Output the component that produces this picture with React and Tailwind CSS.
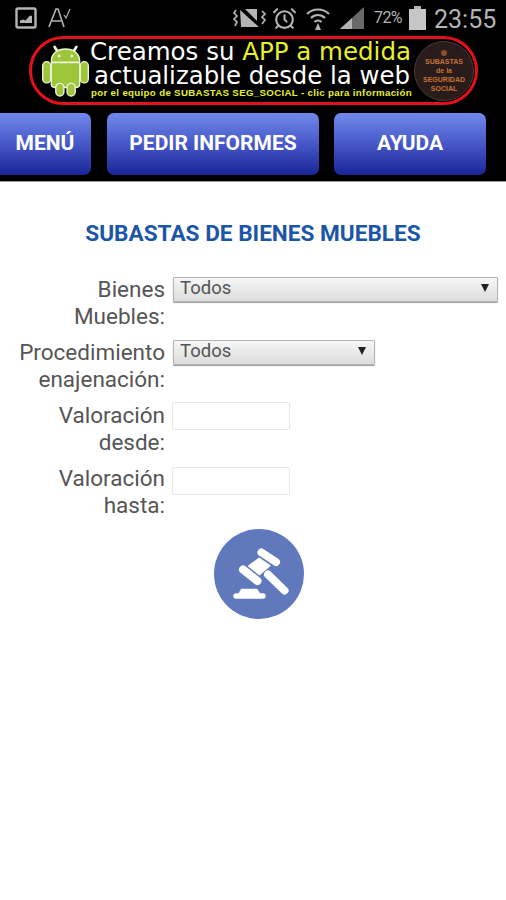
import React from "react";
import { AlarmClock } from "lucide-react";

function Android() {
  return (
    <svg width="47" height="53" viewBox="0 0 52 58" className="shrink-0">
      <g stroke="#eef5df" strokeWidth="3" fill="#9dc63a" paintOrder="stroke" strokeLinejoin="round">
        <path d="M14 3 L18 9 M38 3 L34 9" strokeLinecap="round" />
        <path d="M11 19 C11 10 18 6 26 6 C34 6 41 10 41 19 Z" />
        <rect x="1.5" y="20" width="7.5" height="22" rx="3.7" />
        <rect x="43" y="20" width="7.5" height="22" rx="3.7" />
        <path d="M11 21 H41 V44 a3 3 0 0 1 -3 3 H14 a3 3 0 0 1 -3 -3 Z" />
        <rect x="16" y="44" width="7.5" height="12.5" rx="3.7" />
        <rect x="28.5" y="44" width="7.5" height="12.5" rx="3.7" />
      </g>
      <circle cx="19" cy="13" r="1.6" fill="#eef5df" />
      <circle cx="33" cy="13" r="1.6" fill="#eef5df" />
    </svg>
  );
}

function Gavel() {
  return (
    <svg width="90" height="90" viewBox="0 0 90 90" fill="#fff" stroke="#fff" strokeLinecap="round" strokeLinejoin="round">
      <path d="M47.5 23.5 L62 33" strokeWidth="8" fill="none" />
      <path d="M29 40.5 L43.5 52" strokeWidth="8" fill="none" />
      <path d="M45 28.5 L57 36.5 L45.5 46.5 L33.5 37 Z" stroke="none" />
      <path d="M54 45.5 L70.5 61.5" strokeWidth="8" fill="none" />
      <path d="M27.5 60 H43 L46 64.5 H49 a2.4 2.4 0 0 1 0 5 H22 a2.4 2.4 0 0 1 0 -5 H24.5 Z" strokeWidth="0.5" />
    </svg>
  );
}

function StatusBar() {
  return (
    <div className="h-[36px] flex items-center text-[#b4b4b4] font-['Roboto',sans-serif]">
      <svg width="22" height="22" viewBox="0 0 22 22" className="ml-[15px]">
        <rect x="1.5" y="1.5" width="19" height="19" rx="1.5" fill="none" stroke="#b4b4b4" strokeWidth="2.4" />
        <path d="M5 16 V13.5 L8 12.5 L10.5 13.5 L15 8.5 L17 9 V16 Z" fill="#b4b4b4" />
      </svg>
      <svg width="24" height="24" viewBox="0 0 24 24" className="ml-[11px]">
        <path d="M1 21 L8 3 H10 L16 21 M4 15 H13" fill="none" stroke="#b4b4b4" strokeWidth="1.6" />
        <path d="M16 9 L18 12 L22 3" fill="none" stroke="#b4b4b4" strokeWidth="1.2" />
      </svg>
      <svg width="33" height="24" viewBox="0 0 33 24" className="ml-[161px]">
        <g fill="none" stroke="#b4b4b4" strokeWidth="1.7">
          <path d="M3 4 L1 7 L4 10 L1 13 L4 16 L2 20" />
          <path d="M29 5 L32 8 L29 11 L32 14 L29 18" />
        </g>
        <path d="M7 3 L25 19 L25 21 H8 Z" fill="#b4b4b4" />
        <path d="M5 1 L27 21" stroke="#000" strokeWidth="1.5" />
        <path d="M12 3 H24 V15 Z" fill="#b4b4b4" />
      </svg>
      <AlarmClock size={25} strokeWidth={2} className="ml-[6px]" color="#b4b4b4" />
      <svg width="24" height="26" viewBox="0 0 24 26" className="ml-[9px]">
        <g fill="none" stroke="#b4b4b4" strokeWidth="2.2">
          <path d="M1 9 C7 3 17 3 23 9" />
          <path d="M5 13 C9 9 15 9 19 13" />
          <path d="M8.5 17 C10.5 15 13.5 15 15.5 17" />
        </g>
        <path d="M9 25 L12 18 L15 25 Z" fill="#b4b4b4" />
      </svg>
      <svg width="26" height="24" viewBox="0 0 26 24" className="ml-[9px]">
        <path d="M1 23 L25 1 V23 Z" fill="#6a6a6a" />
        <path d="M1 23 L13 12 V23 Z" fill="#b4b4b4" />
      </svg>
      <span className="ml-[9px] text-[16px] w-[33px] tracking-[-0.6px]">72%</span>
      <svg width="17" height="24" viewBox="0 0 17 24" className="ml-[2px]">
        <rect x="5" y="0" width="7" height="3" fill="#b4b4b4" />
        <rect x="0" y="3" width="17" height="21" fill="#c6c6c6" />
      </svg>
      <span className="ml-[8px] mt-[2px] text-[25px] leading-none">23:55</span>
    </div>
  );
}

function Banner() {
  return (
    <div className="ml-[29px] mr-[28px] h-[69px] rounded-full border-[3px] border-[#e5101a] flex items-center pl-[10px] relative">
      <Android />
      <div className="ml-[1px] font-['DejaVu_Sans',sans-serif] text-white whitespace-nowrap">
        <div className="text-[24.5px] leading-[24px] mt-[-2px]">
          Creamos su <span className="text-[#e8f02a]">APP a medida</span>
        </div>
        <div className="text-[24.4px] leading-[23px] ml-[4px]">actualizable desde la web</div>
        <div className="text-[9.7px] leading-[12px] ml-[1px] font-bold text-[#e8f02a] font-['Liberation_Sans',sans-serif] tracking-[0.33px]">
          por el equipo de SUBASTAS SEG_SOCIAL - clic para información
        </div>
      </div>
      <div className="absolute right-[1px] top-[2px] w-[60px] h-[60px] rounded-full bg-[#2a1c1a] border border-[#4a3a38] flex flex-col items-center justify-center text-center text-[#c4733a] text-[7px] leading-[9px] font-bold font-['Liberation_Sans',sans-serif]">
        <div className="w-[6px] h-[6px] rounded-full bg-[#8a5030] mb-[1px]" />
        <div>SUBASTAS<br />de la<br />SEGURIDAD<br />SOCIAL</div>
      </div>
    </div>
  );
}

function NavButton({ className, children }) {
  return (
    <button className={"h-[62px] rounded-[7px] bg-gradient-to-b from-[#7189ea] via-[#4757c8] to-[#1b2496] text-white font-bold text-[21px] font-['Roboto',sans-serif] flex items-center justify-center " + className}>
      {children}
    </button>
  );
}

function Row({ label, children }) {
  return (
    <div className="h-[63px] flex items-start">
      <div className="w-[165px] shrink-0 text-right text-[22.5px] leading-[27px] text-[#555] font-['Roboto',sans-serif]">
        {label[0]}<br />{label[1]}
      </div>
      {children}
    </div>
  );
}

function Select({ className }) {
  return (
    <div className={"relative h-[25px] ml-[8px] " + className}>
      <select className="appearance-none w-full h-full border border-[#b5b5b5] shadow-[0_1px_1px_#999] rounded-[1px] bg-gradient-to-b from-[#f6f6f6] to-[#dcdcdc] pl-[6px] pb-[4px] text-[18.5px] leading-[20px] text-[#555] font-['Roboto',sans-serif]">
        <option>Todos</option>
      </select>
      <svg width="8" height="8" viewBox="0 0 8 8" className="absolute right-[9px] top-[8px]">
        <path d="M0 0 H8 L4 8 Z" fill="#222" />
      </svg>
    </div>
  );
}

function Input({ className }) {
  return <input type="text" className={"ml-[7px] w-[118px] h-[28px] bg-white border border-[#e8e8e8] rounded-[2px] " + className} />;
}

export default function App() {
  return (
    <div className="w-[506px] h-[900px] bg-white overflow-hidden">
      <header className="h-[182px] bg-black border-b border-[#999]">
        <StatusBar />
        <Banner />
        <nav className="mt-[8px] flex">
          <NavButton className="w-[92px] ml-[-1px] rounded-l-none">MENÚ</NavButton>
          <NavButton className="w-[212px] ml-[16px]">PEDIR INFORMES</NavButton>
          <NavButton className="w-[152px] ml-[15px]">AYUDA</NavButton>
        </nav>
      </header>
      <h1 className="mt-[40px] text-center text-[22.6px] leading-[24px] font-bold text-[#1a56a8] font-['Roboto',sans-serif]">
        SUBASTAS DE BIENES MUEBLES
      </h1>
      <form className="mt-[30px]">
        <Row label={["Bienes", "Muebles:"]}><Select className="w-[325px]" /></Row>
        <Row label={["Procedimiento", "enajenación:"]}><Select className="w-[202px]" /></Row>
        <Row label={["Valoración", "desde:"]}><Input className="mt-0" /></Row>
        <Row label={["Valoración", "hasta:"]}><Input className="mt-[2px]" /></Row>
        <div className="flex justify-center mt-[1px]">
          <button type="button" className="w-[90px] h-[90px] rounded-full bg-[#6079bd] ml-[12px]">
            <Gavel />
          </button>
        </div>
      </form>
    </div>
  );
}
